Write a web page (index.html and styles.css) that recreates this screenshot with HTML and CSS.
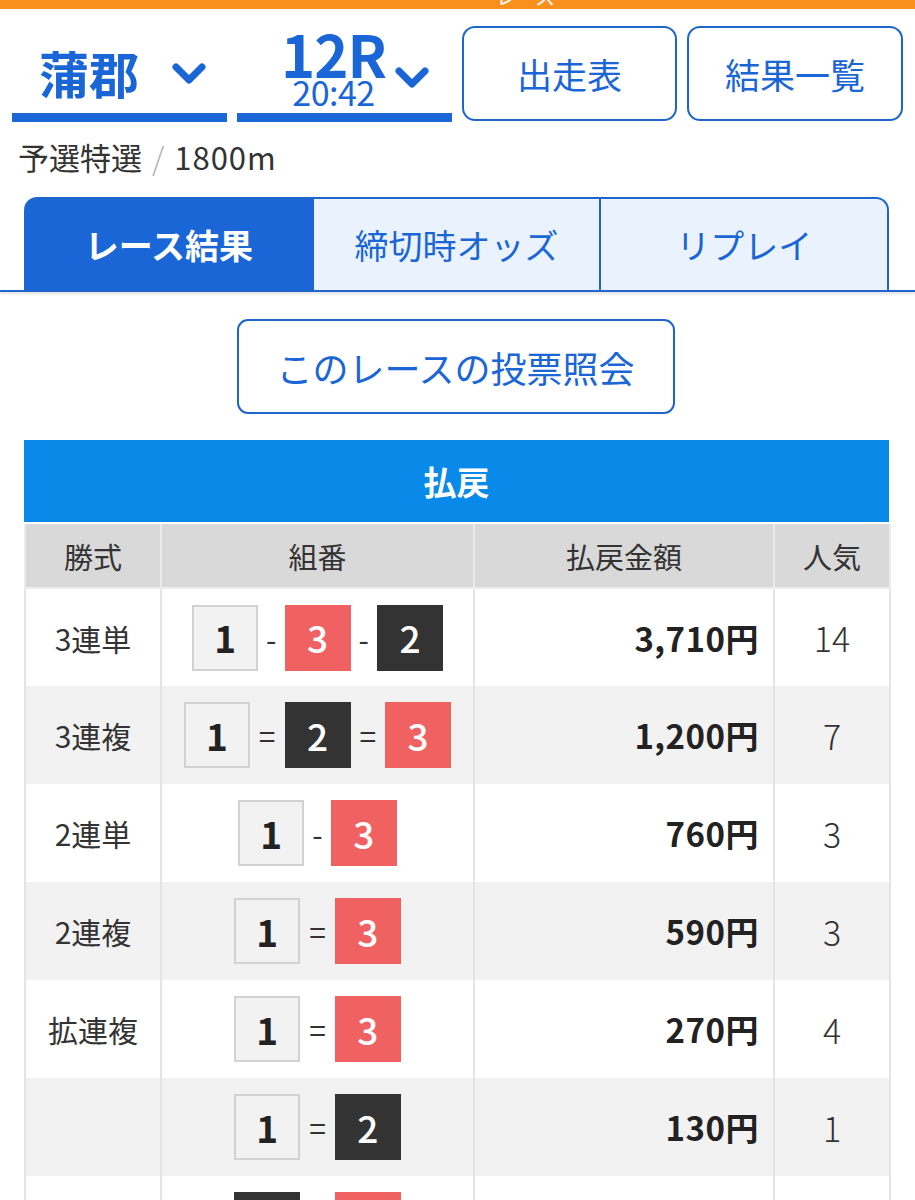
FILE: index.html
```html
<!DOCTYPE html>
<html lang="ja">
<head>
<meta charset="utf-8">
<title>レース結果</title>
<link rel="stylesheet" href="styles.css">
</head>
<body>
<div class="topbar"><span class="topbar-text">レース</span></div>

<div class="selectors">
  <div class="sel sel-place">
    <span class="place">蒲郡</span>
    <svg class="chev" viewBox="0 0 36 24" width="36" height="24"><path d="M5 5 L18 18 L31 5" fill="none" stroke="#1a66d6" stroke-width="7" stroke-linecap="round" stroke-linejoin="round"/></svg>
  </div>
  <div class="sel sel-race">
    <div class="race-num">
      <span class="race">12R</span>
      <span class="time">20:42</span>
    </div>
    <svg class="chev chev-race" viewBox="0 0 36 24" width="36" height="24"><path d="M5 5 L18 18 L31 5" fill="none" stroke="#1a66d6" stroke-width="7" stroke-linecap="round" stroke-linejoin="round"/></svg>
  </div>
  <div class="btn-outline">出走表</div>
  <div class="btn-outline">結果一覧</div>
</div>

<div class="subtitle">予選特選<span class="slash">/</span><span class="dist">1800m</span></div>

<div class="tabs-wrap">
  <div class="tabs">
    <div class="tab tab-active">レース結果</div>
    <div class="tab">締切時オッズ</div>
    <div class="tab">リプレイ</div>
  </div>
</div>

<div class="vote-wrap"><div class="vote-btn">このレースの投票照会</div></div>

<div class="payout">
  <div class="payout-title">払戻</div>
  <table class="ptable">
    <colgroup><col class="c1"><col class="c2"><col class="c3"><col class="c4"></colgroup>
    <thead>
      <tr><th>勝式</th><th>組番</th><th>払戻金額</th><th>人気</th></tr>
    </thead>
    <tbody>
      <tr>
        <td class="kind">3連単</td>
        <td class="combo"><span class="b b1">1</span><span class="sep">-</span><span class="b b3">3</span><span class="sep">-</span><span class="b b2">2</span></td>
        <td class="amt">3,710円</td><td class="pop">14</td>
      </tr>
      <tr class="alt">
        <td class="kind">3連複</td>
        <td class="combo"><span class="b b1">1</span><span class="sep eq">=</span><span class="b b2">2</span><span class="sep eq">=</span><span class="b b3">3</span></td>
        <td class="amt">1,200円</td><td class="pop">7</td>
      </tr>
      <tr>
        <td class="kind">2連単</td>
        <td class="combo"><span class="b b1">1</span><span class="sep">-</span><span class="b b3">3</span></td>
        <td class="amt">760円</td><td class="pop">3</td>
      </tr>
      <tr class="alt">
        <td class="kind">2連複</td>
        <td class="combo"><span class="b b1">1</span><span class="sep eq">=</span><span class="b b3">3</span></td>
        <td class="amt">590円</td><td class="pop">3</td>
      </tr>
      <tr>
        <td class="kind">拡連複</td>
        <td class="combo"><span class="b b1">1</span><span class="sep eq">=</span><span class="b b3">3</span></td>
        <td class="amt">270円</td><td class="pop">4</td>
      </tr>
      <tr class="alt">
        <td class="kind"></td>
        <td class="combo"><span class="b b1">1</span><span class="sep eq">=</span><span class="b b2">2</span></td>
        <td class="amt">130円</td><td class="pop">1</td>
      </tr>
      <tr>
        <td class="kind"></td>
        <td class="combo"><span class="b b2">2</span><span class="sep eq">=</span><span class="b b3">3</span></td>
        <td class="amt">400円</td><td class="pop">6</td>
      </tr>
    </tbody>
  </table>
</div>
</body>
</html>
```

FILE: styles.css
```css
* { box-sizing: border-box; }
html, body { margin: 0; padding: 0; background: #fff; }
body {
  width: 915px;
  font-family: "Noto Sans CJK JP", "Noto Sans", sans-serif;
  color: #333;
}

.topbar {
  height: 9px;
  background: #f98f1d;
  overflow: hidden;
  text-align: center;
  padding-left: 136px;
}
.topbar-text {
  display: block;
  color: #fff;
  font-size: 20px;
  line-height: 20px;
  margin-top: -13px;
}

.selectors {
  display: flex;
  gap: 10px;
  padding: 17px 12px 0 12px;
}
.sel {
  width: 215px;
  height: 96px;
  border-bottom: 9px solid #1a66d6;
  display: flex;
  align-items: center;
  color: #1a66d6;
}
.sel-place { padding-left: 27px; padding-top: 4px; }
.place {
  font-size: 50px;
  font-weight: 700;
  line-height: 1;
  letter-spacing: 0;
}
.sel-place .chev { margin-left: 32px; margin-top: 4px; }
.sel-race { padding-left: 44px; }
.race-num {
  display: flex;
  flex-direction: column;
  align-items: center;
  margin-top: -4px;
}
.race {
  font-size: 58px;
  font-weight: 700;
  line-height: 48px;
  letter-spacing: -1px;
}
.time {
  font-size: 34px;
  line-height: 30px;
  font-weight: 400;
  letter-spacing: -0.5px;
}
.chev-race { margin-left: 8px; margin-top: 16px; }

.btn-outline {
  width: 215px;
  height: 95px;
  border: 2px solid #1f66cc;
  border-radius: 13px;
  display: flex;
  align-items: center;
  justify-content: center;
  color: #1a66d6;
  font-size: 35px;
}
.btn-outline:last-child { width: 216px; }

.subtitle {
  padding: 12px 18px 0 18px;
  height: 58px;
  font-size: 31px;
  line-height: 46px;
  color: #333;
}
.dist { letter-spacing: 1px; }
.slash { color: #b0b0b0; margin: 0 10px; font-weight: 300; }

.tabs-wrap {
  margin-top: 17px;
  padding: 0 26px 0 24px;
  border-bottom: 2px solid #1f66cc;
  box-shadow: 0 2px 3px rgba(0,0,0,0.12);
}
.tabs { display: flex; }
.tab {
  flex: 1;
  height: 93px;
  background: #eaf3fd;
  border: 2px solid #1f66cc;
  border-bottom: none;
  border-left: none;
  display: flex;
  align-items: center;
  justify-content: center;
  color: #1a66d6;
  font-size: 34px;
}
.tab:first-child { border-left: 2px solid #1f66cc; border-top-left-radius: 13px; }
.tab:last-child { border-top-right-radius: 13px; }
.tab-active {
  background: #1a66d6;
  color: #fff;
  font-weight: 700;
}

.vote-wrap {
  display: flex;
  justify-content: center;
  padding-top: 27px;
  padding-right: 4px;
}
.vote-btn {
  width: 438px;
  height: 95px;
  border: 2px solid #1f66cc;
  border-radius: 11px;
  display: flex;
  align-items: center;
  justify-content: center;
  color: #1a66d6;
  font-size: 36px;
}

.payout {
  margin: 26px 26px 0 24px;
}
.payout-title {
  height: 84px;
  background: #0989e8;
  color: #fff;
  font-size: 33px;
  font-weight: 700;
  display: flex;
  align-items: center;
  justify-content: center;
  border-bottom: 2px solid #fff;
}
.ptable {
  width: 865px;
  border-collapse: collapse;
  table-layout: fixed;
}
.c1 { width: 136px; }
.c2 { width: 313px; }
.c3 { width: 300px; }
.c4 { width: 116px; }
.ptable th {
  height: 64px;
  background: #d9d9d9;
  font-weight: 400;
  font-size: 29px;
  color: #333;
  border: 2px solid #ececec;
  border-top: none;
  padding: 0;
}
.ptable td {
  height: 98px;
  border-left: 2px solid #e4e4e4;
  border-right: 2px solid #e4e4e4;
  padding: 0;
  text-align: center;
  vertical-align: middle;
}
.ptable tr.alt td { background: #f2f2f2; }
.kind { font-size: 30px; color: #333; }
.combo { font-size: 0; }
.b {
  display: inline-flex;
  align-items: center;
  justify-content: center;
  width: 66px;
  height: 66px;
  font-size: 37px;
  font-weight: 500;
  vertical-align: middle;
  line-height: 1;
}
.b1 { background: #f2f2f2; border: 2px solid #d2d2d2; color: #222; font-weight: 700; }
.b2 { background: #333; color: #fff; }
.b3 { background: #f06262; color: #fff; }
.sep {
  display: inline-block;
  vertical-align: middle;
  font-size: 30px;
  color: #333;
  margin: 0 8px;
  line-height: 1;
}
.sep.eq { margin: 0 9px; }
.amt {
  text-align: right !important;
  padding-right: 14px !important;
  font-size: 33px;
  font-weight: 700;
  color: #222;
  letter-spacing: 0.5px;
}
.pop { font-size: 34px; font-weight: 300; color: #333; }
```
